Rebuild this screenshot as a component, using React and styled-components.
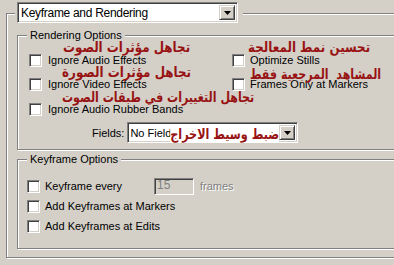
import styled, { createGlobalStyle } from "styled-components";

const GlobalStyle = createGlobalStyle`
  html, body {
    margin: 0;
    padding: 0;
    background: #d4d0c8;
    overflow: hidden;
  }
  body {
    font-family: "Liberation Sans", Arial, sans-serif;
    font-size: 11px;
    color: #000;
  }
`;

const etched = `
  border: 1px solid #808080;
  box-shadow: inset 1px 1px 0 #fff, 1px 1px 0 #fff;
`;

const Screen = styled.div`
  width: 394px;
  height: 265px;
  overflow: hidden;
  box-sizing: border-box;
  padding: 13px 0 0 6px;
`;

const OuterGroup = styled.div`
  ${etched}
  width: 430px;
  padding-bottom: 8px;
`;

const HeaderSlot = styled.div`
  display: flex;
  width: fit-content;
  margin: -12px 0 0 8px;
  padding: 0 5px 0 2px;
  background: #d4d0c8;
`;

const Group = styled.div`
  ${etched}
  position: relative;
  margin: ${(p) => p.$top}px 0 0 10px;
  padding-bottom: ${(p) => p.$bottom}px;
`;

const GroupTitle = styled.div`
  width: fit-content;
  height: 13px;
  line-height: 13px;
  margin: -7px 0 0 9px;
  padding: 0 3px;
  background: #d4d0c8;
`;

const Combo = styled.div`
  display: flex;
  width: ${(p) => p.$w}px;
  height: 21px;
  box-sizing: border-box;
  padding: 2px;
  background: #fff;
  border: 1px solid;
  border-color: #808080 #fff #fff #808080;
  box-shadow: inset 1px 1px 0 #404040, inset -1px -1px 0 #d4d0c8;
`;

const ComboText = styled.div`
  position: relative;
  flex: 1;
  display: flex;
  align-items: center;
  padding-left: ${(p) => (p.$big ? 1 : 0)}px;
  font-size: ${(p) => (p.$big ? 12 : 11)}px;
  letter-spacing: ${(p) => (p.$big ? -0.3 : 0)}px;
  white-space: nowrap;
`;

const DropButton = styled.div`
  flex: none;
  width: 16px;
  box-sizing: border-box;
  display: flex;
  align-items: center;
  justify-content: center;
  background: #d4d0c8;
  border: 1px solid;
  border-color: #d4d0c8 #404040 #404040 #d4d0c8;
  box-shadow: inset 1px 1px 0 #fff, inset -1px -1px 0 #808080;
`;

const CheckGrid = styled.div`
  display: grid;
  grid-template-columns: 203px auto;
  grid-template-rows: 24px 25px 13px;
  align-items: start;
  padding: 12px 0 0 11px;
`;

const CheckList = styled.div`
  display: grid;
  grid-auto-rows: 13px;
  row-gap: 7px;
  padding: 14px 0 0 9px;
`;

const CheckRow = styled.label`
  display: flex;
  align-items: center;
  gap: ${(p) => p.$gap}px;
  height: 13px;
  line-height: 13px;
  white-space: nowrap;
`;

const Box = styled.span`
  flex: none;
  width: 13px;
  height: 13px;
  box-sizing: border-box;
  background: #fff;
  border: 1px solid;
  border-color: #808080 #fff #fff #808080;
  box-shadow: inset 1px 1px 0 #404040, inset -1px -1px 0 #d4d0c8;
`;

const FieldsRow = styled.div`
  display: flex;
  align-items: center;
  gap: 3px;
  margin-top: 6px;
  padding-left: 74px;
`;

const LabelCell = styled.span`
  width: ${(p) => p.$w}px;
  flex: none;
`;

const NumberBox = styled.div`
  flex: none;
  width: 40px;
  height: 17px;
  box-sizing: border-box;
  padding-left: 2px;
  line-height: 13px;
  font-size: 12px;
  color: #808080;
  background: #d4d0c8;
  border: 1px solid;
  border-color: #808080 #fff #fff #808080;
  box-shadow: inset 1px 1px 0 #404040, inset -1px -1px 0 #d4d0c8;
`;

const Disabled = styled.span`
  margin-left: 1px;
  color: #808080;
  text-shadow: 1px 1px 0 #fff;
`;

const Note = styled.div`
  position: absolute;
  left: ${(p) => p.$x}px;
  top: ${(p) => p.$y}px;
  direction: rtl;
  white-space: pre;
  font-family: "DejaVu Sans", sans-serif;
  font-weight: bold;
  font-size: 14px;
  line-height: 16px;
  color: #981414;
  transform: scaleX(${(p) => p.$sx || 0.85});
  transform-origin: left top;
`;

const ComboNote = styled(Note)`
  left: auto;
  right: 0;
  background: #fff;
  transform-origin: right top;
`;

function Arrow() {
  return (
    <svg width="7" height="4" viewBox="0 0 7 4">
      <polygon points="0,0 7,0 3.5,4" fill="#000" />
    </svg>
  );
}

function Check({ children, gap = 5 }) {
  return (
    <CheckRow $gap={gap}>
      <Box />
      <span>{children}</span>
    </CheckRow>
  );
}

export default function App() {
  return (
    <>
      <GlobalStyle />
      <Screen>
        <OuterGroup>
          <HeaderSlot>
            <Combo $w={221}>
              <ComboText $big>Keyframe and Rendering</ComboText>
              <DropButton>
                <Arrow />
              </DropButton>
            </Combo>
          </HeaderSlot>

          <Group $top={12} $bottom={6}>
            <GroupTitle>Rendering Options</GroupTitle>
            <CheckGrid>
              <Check gap={6}>Ignore Audio Effects</Check>
              <Check gap={5}>Optimize Stills</Check>
              <Check gap={6}>Ignore Video Effects</Check>
              <Check gap={5}>Frames Only at Markers</Check>
              <Check gap={6}>Ignore Audio Rubber Bands</Check>
            </CheckGrid>
            <FieldsRow>
              <span>Fields:</span>
              <Combo $w={171}>
                <ComboText>
                  No Fields
                  <ComboNote $y={1} $sx={0.8}>ضبط وسيط الاخراج</ComboNote>
                </ComboText>
                <DropButton>
                  <Arrow />
                </DropButton>
              </Combo>
            </FieldsRow>

            <Note $x={45} $y={3}>تجاهل مؤثرات الصوت</Note>
            <Note $x={230} $y={3}>تحسين نمط المعالجة</Note>
            <Note $x={44} $y={28}>تجاهل مؤثرات الصورة</Note>
            <Note $x={232} $y={30} $sx={0.79}>{"المشاهد  المرجعية فقط"}</Note>
            <Note $x={44} $y={53} $sx={0.79}>تجاهل التغييرات في طبقات الصوت</Note>
          </Group>

          <Group $top={9} $bottom={15}>
            <GroupTitle>Keyframe Options</GroupTitle>
            <CheckList>
              <CheckRow $gap={5}>
                <Box />
                <LabelCell $w={104}>Keyframe every</LabelCell>
                <NumberBox>15</NumberBox>
                <Disabled>frames</Disabled>
              </CheckRow>
              <Check>Add Keyframes at Markers</Check>
              <Check>Add Keyframes at Edits</Check>
            </CheckList>
          </Group>
        </OuterGroup>
      </Screen>
    </>
  );
}
